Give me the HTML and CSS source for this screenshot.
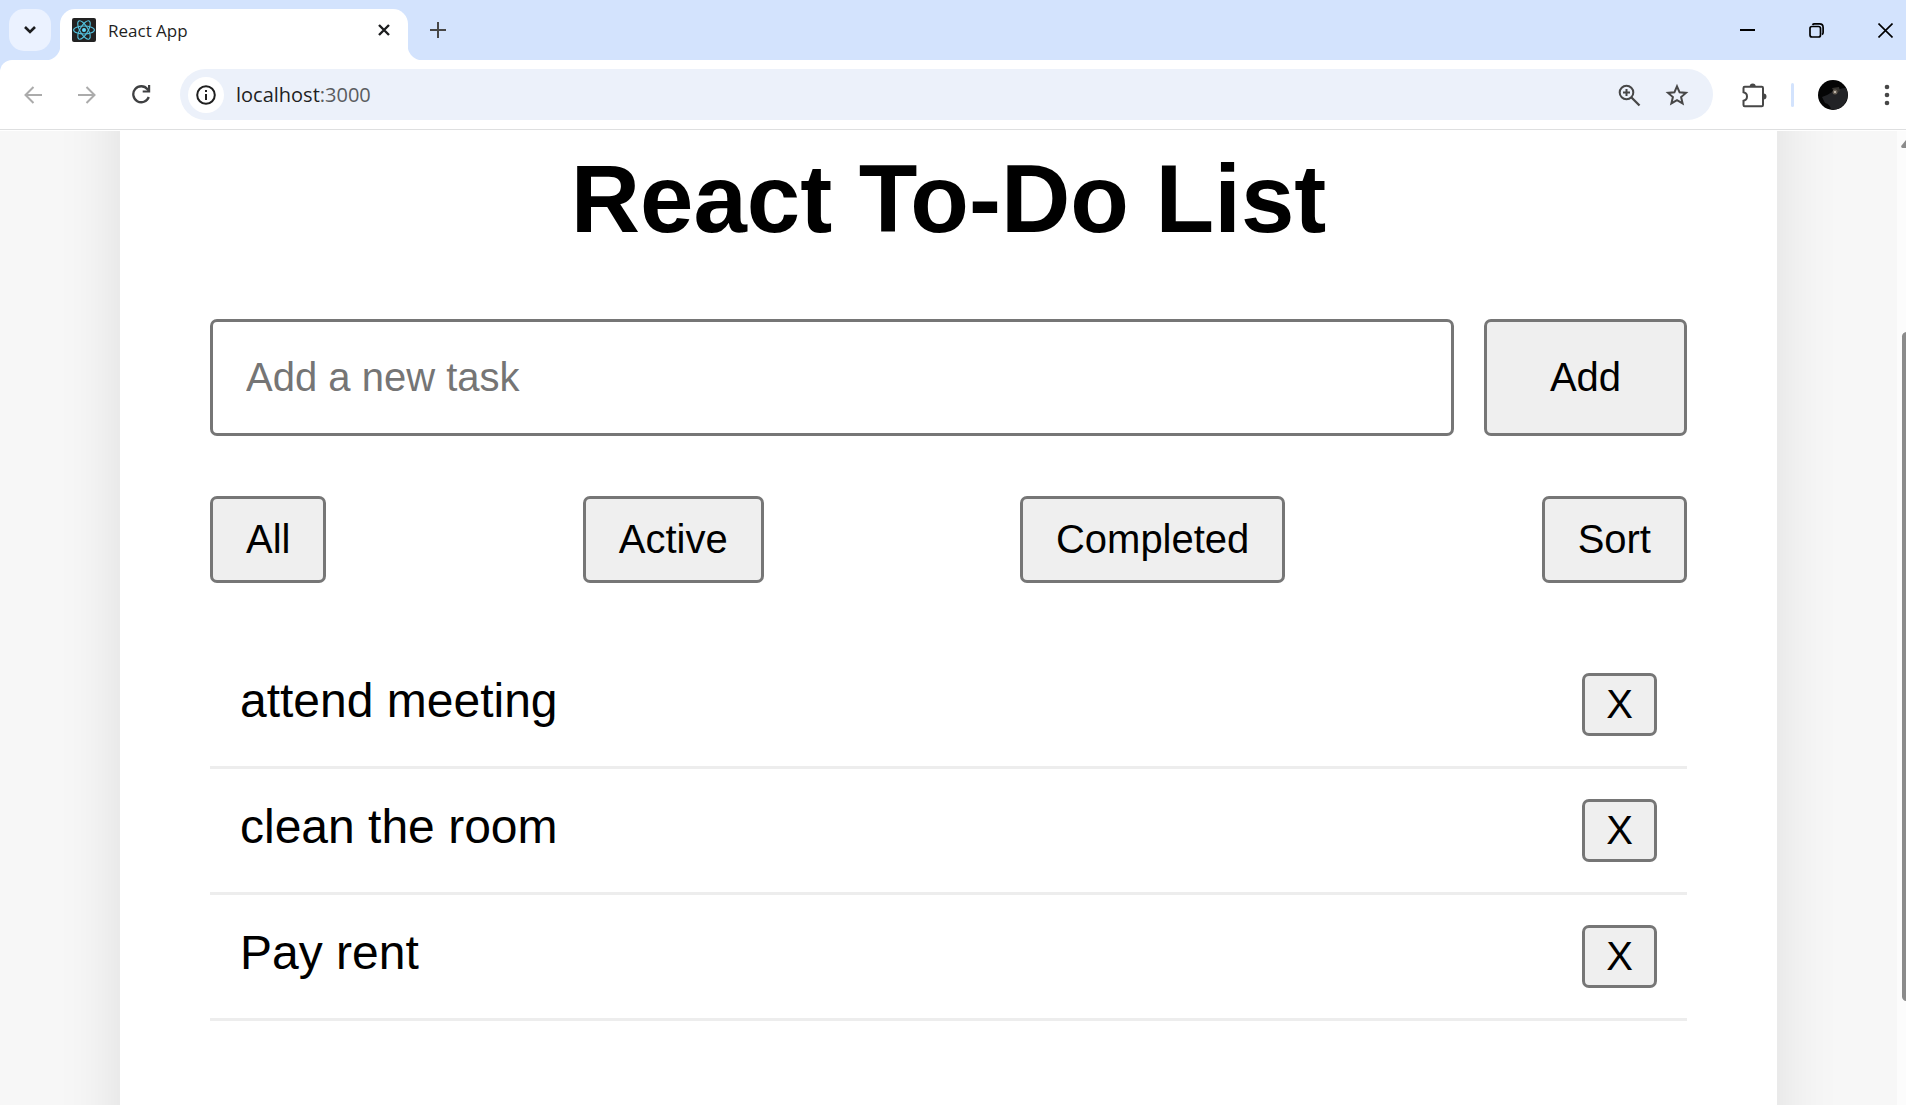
FILE: index.html
```html
<!DOCTYPE html>
<html lang="en">
<head>
<meta charset="utf-8">
<meta name="viewport" content="width=device-width, initial-scale=1">
<title>React App</title>
<link rel="stylesheet" href="styles.css">
</head>
<body>
<header class="browser">
  <div class="tabstrip">
    <button class="tab-search" type="button" aria-label="Search tabs">
      <svg width="14" height="10" viewBox="0 0 14 10"><path d="M2 2l5 5 5-5" fill="none" stroke="#1c1d1f" stroke-width="2.6"/></svg>
    </button>
    <div class="tab">
      <svg width="24" height="24" viewBox="0 0 24 24">
        <rect width="24" height="24" rx="2" fill="#222"/>
        <g fill="none" stroke="#53c1de" stroke-width="1.1">
          <ellipse cx="12" cy="12" rx="10.4" ry="4"/>
          <ellipse cx="12" cy="12" rx="10.4" ry="4" transform="rotate(60 12 12)"/>
          <ellipse cx="12" cy="12" rx="10.4" ry="4" transform="rotate(120 12 12)"/>
        </g>
        <circle cx="12" cy="12" r="2" fill="#61dafb"/>
      </svg>
      <span class="tab-title">React App</span>
      <button class="icon-button" type="button" aria-label="Close tab">
        <svg width="12" height="12" viewBox="0 0 12 12"><path d="M1 1l10 10M11 1L1 11" stroke="#1c1d1f" stroke-width="2.4"/></svg>
      </button>
    </div>
    <button class="icon-button new-tab" type="button" aria-label="New tab">
      <svg width="16" height="16" viewBox="0 0 16 16"><path d="M8 0v16M0 8h16" stroke="#474747" stroke-width="2"/></svg>
    </button>
    <div class="window-controls">
      <button class="icon-button" type="button" aria-label="Minimize">
        <svg width="15" height="15" viewBox="0 0 15 15"><path d="M0 7h15" stroke="#000" stroke-width="2"/></svg>
      </button>
      <button class="icon-button" type="button" aria-label="Restore">
        <svg width="15" height="15" viewBox="0 0 15 15" fill="none" stroke="#000" stroke-width="1.7"><rect x="1" y="3.5" width="10.5" height="10.5" rx="2"/><path d="M3.5 1.8Q4 .9 5.500 .9H10.500Q14.100 .9 14.100 4.500V9.500Q14.100 11 13 11.500"/></svg>
      </button>
      <button class="icon-button" type="button" aria-label="Close">
        <svg width="15" height="15" viewBox="0 0 15 15"><path d="M.5.5l14 14M14.500.5l-14 14" stroke="#000" stroke-width="1.6"/></svg>
      </button>
    </div>
  </div>
  <div class="toolbar">
    <button class="nav-button" type="button" aria-label="Back">
      <svg width="18" height="18" viewBox="0 0 18 18"><path d="M18 9H2M9.500 1L1.500 9l8 8" fill="none" stroke="#ababab" stroke-width="2"/></svg>
    </button>
    <button class="nav-button" type="button" aria-label="Forward">
      <svg width="18" height="18" viewBox="0 0 18 18"><path d="M0 9h16M8.500 1l8 8-8 8" fill="none" stroke="#ababab" stroke-width="2"/></svg>
    </button>
    <button class="nav-button" type="button" aria-label="Reload">
      <svg width="19" height="19" viewBox="0 0 19 19"><path d="M16.800 12A8 8 0 1 1 15.500 4.200L17 6" fill="none" stroke="#3f4042" stroke-width="2.3"/><path d="M18.200 0v7.500h-7.500V5.500h5.300V0z" fill="#3f4042"/></svg>
    </button>
    <div class="address">
      <button class="site-info" type="button" aria-label="View site information">
        <svg width="20" height="20" viewBox="0 0 20 20"><circle cx="10" cy="10" r="8.800" fill="none" stroke="#1f1f1f" stroke-width="2"/><path d="M10 9v6M10 5v2" stroke="#1f1f1f" stroke-width="2"/></svg>
      </button>
      <span class="url">localhost<span class="port">:3000</span></span>
      <button class="icon-button" type="button" aria-label="Zoom">
        <svg width="24" height="24" viewBox="0 0 24 24" fill="none" stroke="#474747"><circle cx="9.500" cy="9.500" r="6.800" stroke-width="2"/><path d="M14.500 14.500l8 8" stroke-width="2.300"/><path d="M9.500 6v7M6 9.500h7" stroke-width="2"/></svg>
      </button>
      <button class="icon-button" type="button" aria-label="Bookmark this tab">
        <svg width="24" height="24" viewBox="0 0 24 24"><path d="M12 3.300l2.600 6 6.400.6-4.900 4.200 1.500 6.300L12 17.100l-5.600 3.300 1.500-6.300L3 9.900l6.400-.6z" fill="none" stroke="#474747" stroke-width="2"/></svg>
      </button>
    </div>
    <button class="nav-button extensions" type="button" aria-label="Extensions">
      <svg width="26" height="26" viewBox="0 0 26 26"><path d="M2.500 10.300V6q0-1.200 1.200-1.200H20.800q1.200 0 1.200 1.200V23q0 1.200-1.200 1.200H3.700q-1.200 0-1.200-1.200V18.700Q6 18 6 14.500T2.500 10.300z" fill="none" stroke="#474747" stroke-width="2"/><path d="M8.700 4.500a3 3 0 0 1 6 0zM22.500 11.500a3 3 0 0 1 0 6z" fill="#474747"/></svg>
    </button>
    <span class="separator"></span>
    <button class="icon-button profile" type="button" aria-label="Profile">
      <svg width="30" height="30" viewBox="0 0 30 30">
        <circle cx="15" cy="15" r="15" fill="#050505"/>
        <path d="M4 17Q10 15 14 12q8-4 14-4a15 15 0 0 1-15 21.500Q12 24 7 23z" fill="#222326"/>
        <path d="M14 8l7-1 1 4-3 2-3-1z" fill="#35332f"/>
        <circle cx="17" cy="12" r="2.500" fill="#665e54"/><circle cx="17" cy="12" r="1" fill="#d8d0c4"/>
      </svg>
    </button>
    <button class="icon-button more" type="button" aria-label="Menu">
      <svg width="6" height="22" viewBox="0 0 6 22" fill="#474747"><circle cx="3" cy="3" r="2.300"/><circle cx="3" cy="11" r="2.300"/><circle cx="3" cy="19" r="2.300"/></svg>
    </button>
  </div>
</header>

<div class="viewport">
  <main class="page">
    <section class="todo">
      <h1 class="todo-title">React To-Do List</h1>
      <form class="new-task" onsubmit="return false">
        <input class="task-input" type="text" placeholder="Add a new task" aria-label="Add a new task">
        <button class="button button-add" type="submit">Add</button>
      </form>
      <div class="filters">
        <button class="button" type="button">All</button>
        <button class="button" type="button">Active</button>
        <button class="button" type="button">Completed</button>
        <button class="button" type="button">Sort</button>
      </div>
      <ul class="tasks">
        <li class="task"><span>attend meeting</span><button class="button button-remove" type="button">X</button></li>
        <li class="task"><span>clean the room</span><button class="button button-remove" type="button">X</button></li>
        <li class="task"><span>Pay rent</span><button class="button button-remove" type="button">X</button></li>
      </ul>
    </section>
  </main>
  <div class="scrollbar" aria-hidden="true">
    <svg class="scroll-arrow" width="16" height="10" viewBox="0 0 16 10"><path d="M1.500 10Q-.5 9.500.5 7.500L6.500 0h3l6 7.500q1 2-1 2.500z" fill="#8b8b8b"/></svg>
    <div class="scroll-track"><div class="scroll-thumb"></div></div>
  </div>
</div>
</body>
</html>
```

FILE: styles.css
```css
* {
  box-sizing: border-box;
}

body {
  margin: 0;
  height: 100vh;
  display: flex;
  flex-direction: column;
  overflow: hidden;
  background: #fff;
  color: #000;
  font-family: "Liberation Sans", Arial, sans-serif;
}

button {
  margin: 0;
  font-family: inherit;
}

svg {
  display: block;
}

/* Browser frame */

.browser {
  flex: none;
  background: #d3e3fd;
  color: #1f1f1f;
  font-family: "Open Sans", "Noto Sans", sans-serif;
}

.tabstrip {
  display: flex;
  height: 60px;
  padding: 9px 13px 0 9px;
}

.icon-button,
.nav-button,
.site-info,
.tab-search {
  display: flex;
  flex: none;
  align-items: center;
  justify-content: center;
  padding: 0;
  border: 0;
  background: none;
}

.tab-search {
  width: 42px;
  height: 42px;
  border-radius: 15px;
  background: #ebf2ff;
}

.tab {
  position: relative;
  display: flex;
  width: 348px;
  margin-left: 9px;
  padding: 0 18px 9px 12px;
  align-items: center;
  border-radius: 15px 15px 0 0;
  background: #fff;
}

/* Concave corners that join the tab to the toolbar */
.tab::before,
.tab::after {
  content: "";
  position: absolute;
  bottom: 0;
  width: 15px;
  height: 15px;
}

.tab::before {
  right: 100%;
  background: radial-gradient(circle at 0 0, transparent 15px, #fff 16px);
}

.tab::after {
  left: 100%;
  background: radial-gradient(circle at 100% 0, transparent 15px, #fff 16px);
}

.tab-title {
  flex: 1;
  margin-left: 12px;
  padding-top: 2px;
  font-size: 17px;
  line-height: 24px;
}

.new-tab {
  height: 42px;
  margin-left: 22px;
}

.window-controls {
  display: flex;
  height: 42px;
  margin-left: auto;
  gap: 54px;
}

.toolbar {
  display: flex;
  height: 70px;
  padding-left: 6px;
  align-items: center;
  border-bottom: 1px solid #dedfe0;
  border-radius: 12px 0 0 0;
  background: #fff;
}

.nav-button {
  width: 54px;
  height: 51px;
}

.address {
  display: flex;
  flex: 1;
  height: 51px;
  margin-left: 12px;
  padding: 0 24px 0 8px;
  align-items: center;
  gap: 24px;
  border-radius: 26px;
  background: #ecf1fa;
}

.site-info {
  width: 36px;
  height: 36px;
  margin-right: -12px;
  border-radius: 50%;
  background: #fff;
}

.url {
  flex: 1;
  font-size: 20px;
  line-height: 28px;
}

.port {
  color: #5a5c60;
}

.extensions {
  margin-left: 14px;
}

.separator {
  width: 3px;
  height: 24px;
  margin-left: 10px;
  border-radius: 2px;
  background: #d3e3fd;
}

.profile {
  margin-left: 24px;
}

.more {
  width: 38px;
  height: 51px;
  margin-left: 20px;
}

/* Page */

.viewport {
  display: flex;
  flex: 1;
  min-height: 0;
  padding-top: 1px;
}

.page {
  display: flex;
  flex: 1;
  padding: 0 120px;
  overflow: hidden;
  background: #f7f7f7;
}

.todo {
  flex: 1;
  margin: -120px 0;
  padding: 133px 90px 0;
  background: #fff;
  box-shadow: 0 0 60px rgba(0, 0, 0, 0.11);
}

.todo-title {
  margin: 0 0 65px;
  font-size: 96px;
  line-height: 110px;
  text-align: center;
}

.new-task {
  display: flex;
  gap: 30px;
}

.task-input {
  flex: 1;
  min-width: 0;
  height: 117px;
  padding: 0 33px;
  border: 3px solid #767676;
  border-radius: 7px;
  background: #fff;
  font: 40px "Liberation Sans", Arial, sans-serif;
}

.task-input::placeholder {
  color: #757575;
}

.button {
  height: 87px;
  padding: 0 33px;
  border: 3px solid #767676;
  border-radius: 7px;
  background: #efefef;
  color: #000;
  font-size: 40px;
}

.button-add {
  width: 203px;
  height: 117px;
}

.filters {
  display: flex;
  margin: 60px 0;
  justify-content: space-between;
}

.tasks {
  margin: 0;
  padding: 0;
  list-style: none;
}

.task {
  display: flex;
  padding: 30px;
  align-items: flex-start;
  justify-content: space-between;
  border-bottom: 3px solid #ededed;
  font-size: 48px;
  line-height: 55px;
}

.button-remove {
  width: 75px;
  height: 63px;
  padding: 0;
}

/* Scrollbar, cut off by the window edge */

.scrollbar {
  display: flex;
  flex: none;
  flex-direction: column;
  width: 9px;
  padding: 7px 0 0 4px;
  overflow: hidden;
  background: #fcfcfc;
}

.scroll-arrow {
  flex: none;
}

.scroll-track {
  flex: 1;
  padding: 184px 0 104px 1px;
}

.scroll-thumb {
  width: 9px;
  height: 100%;
  border-radius: 5px;
  background: #8b8b8b;
}
```
